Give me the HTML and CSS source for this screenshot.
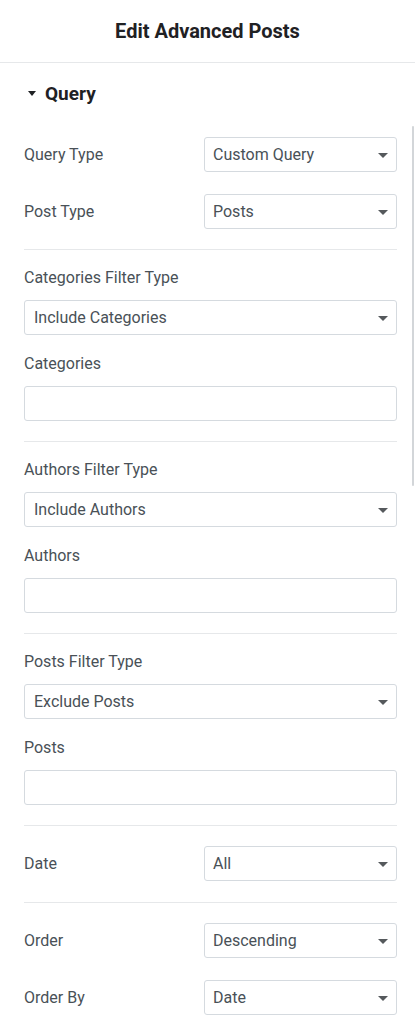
FILE: index.html
```html
<!DOCTYPE html>
<html lang="en">
<head>
  <meta charset="UTF-8" />
  <meta name="viewport" content="width=device-width, initial-scale=1.0"/>
  <title>Edit Advanced Posts</title>
  <link rel="stylesheet" href="styles.css">
</head>
<body>

<div class="panel">
  <header class="panel-header">
    <h1>Edit Advanced Posts</h1>
  </header>

  <div class="panel-body">
    <div class="scroll-thumb"></div>

    <h2 class="group-title"><span class="caret"></span>Query</h2>

    <div class="section first">
      <div class="row">
        <label>Query Type</label>
        <div class="select">Custom Query</div>
      </div>
      <div class="row">
        <label>Post Type</label>
        <div class="select">Posts</div>
      </div>
    </div>

    <div class="section">
      <div class="field">
        <label>Categories Filter Type</label>
        <div class="select">Include Categories</div>
      </div>
      <div class="field">
        <label>Categories</label>
        <div class="input"></div>
      </div>
    </div>

    <div class="section">
      <div class="field">
        <label>Authors Filter Type</label>
        <div class="select">Include Authors</div>
      </div>
      <div class="field">
        <label>Authors</label>
        <div class="input"></div>
      </div>
    </div>

    <div class="section">
      <div class="field">
        <label>Posts Filter Type</label>
        <div class="select">Exclude Posts</div>
      </div>
      <div class="field">
        <label>Posts</label>
        <div class="input"></div>
      </div>
    </div>

    <div class="section single">
      <div class="row">
        <label>Date</label>
        <div class="select">All</div>
      </div>
    </div>

    <div class="section">
      <div class="row">
        <label>Order</label>
        <div class="select">Descending</div>
      </div>
      <div class="row">
        <label>Order By</label>
        <div class="select">Date</div>
      </div>
    </div>
  </div>
</div>

</body>
</html>
```

FILE: styles.css
```css
body {
  font-family: Roboto, 'Liberation Sans', sans-serif;
  background-color: #fff;
  color: #495157;
  margin: 0;
}
.panel {
  width: 415px;
}
.panel-header {
  height: 62px;
  border-bottom: 1px solid #e6e8ea;
  display: flex;
  align-items: center;
  justify-content: center;
}
.panel-header h1 {
  margin: 0;
  font-size: 20px;
  font-weight: 700;
  color: #1f2124;
}
.panel-body {
  position: relative;
  padding: 0 18px 0 24px;
}
.scroll-thumb {
  position: absolute;
  right: 1px;
  top: 63px;
  width: 2px;
  height: 360px;
  background: #d3d6d9;
  border-radius: 1px;
}
.group-title {
  margin: 0;
  height: 60px;
  display: flex;
  align-items: center;
  font-size: 19px;
  font-weight: 700;
  color: #1f2124;
}
.caret {
  width: 0;
  height: 0;
  border-left: 4px solid transparent;
  border-right: 4px solid transparent;
  border-top: 5px solid #1f2124;
  margin: 0 9px 0 4px;
}
.section {
  border-top: 1px solid #e6e8ea;
  padding: 18px 0 20px;
  display: flex;
  flex-direction: column;
  gap: 19px;
}
.section.first {
  border-top: none;
  padding-top: 14px;
}
.section:has(.row) {
  padding-top: 20px;
  gap: 22px;
}
.section.first:has(.row) {
  padding-top: 14px;
}
.section.single {
  padding-bottom: 21px;
}
.row {
  display: grid;
  grid-template-columns: 180px 1fr;
  align-items: center;
}
.field {
  display: flex;
  flex-direction: column;
  gap: 12px;
}
label {
  font-size: 16px;
  line-height: 20px;
}
.select, .input {
  box-sizing: border-box;
  height: 35px;
  border: 1px solid #d5dadf;
  border-radius: 3px;
  background: #fff;
}
.select {
  position: relative;
  display: flex;
  align-items: center;
  padding: 0 30px 0 8px;
  font-size: 16px;
  color: #495157;
}
.field .select {
  padding-left: 9px;
}
.select::after {
  content: "";
  position: absolute;
  right: 8px;
  top: 15px;
  border-left: 5px solid transparent;
  border-right: 5px solid transparent;
  border-top: 5px solid #55595c;
}
```
